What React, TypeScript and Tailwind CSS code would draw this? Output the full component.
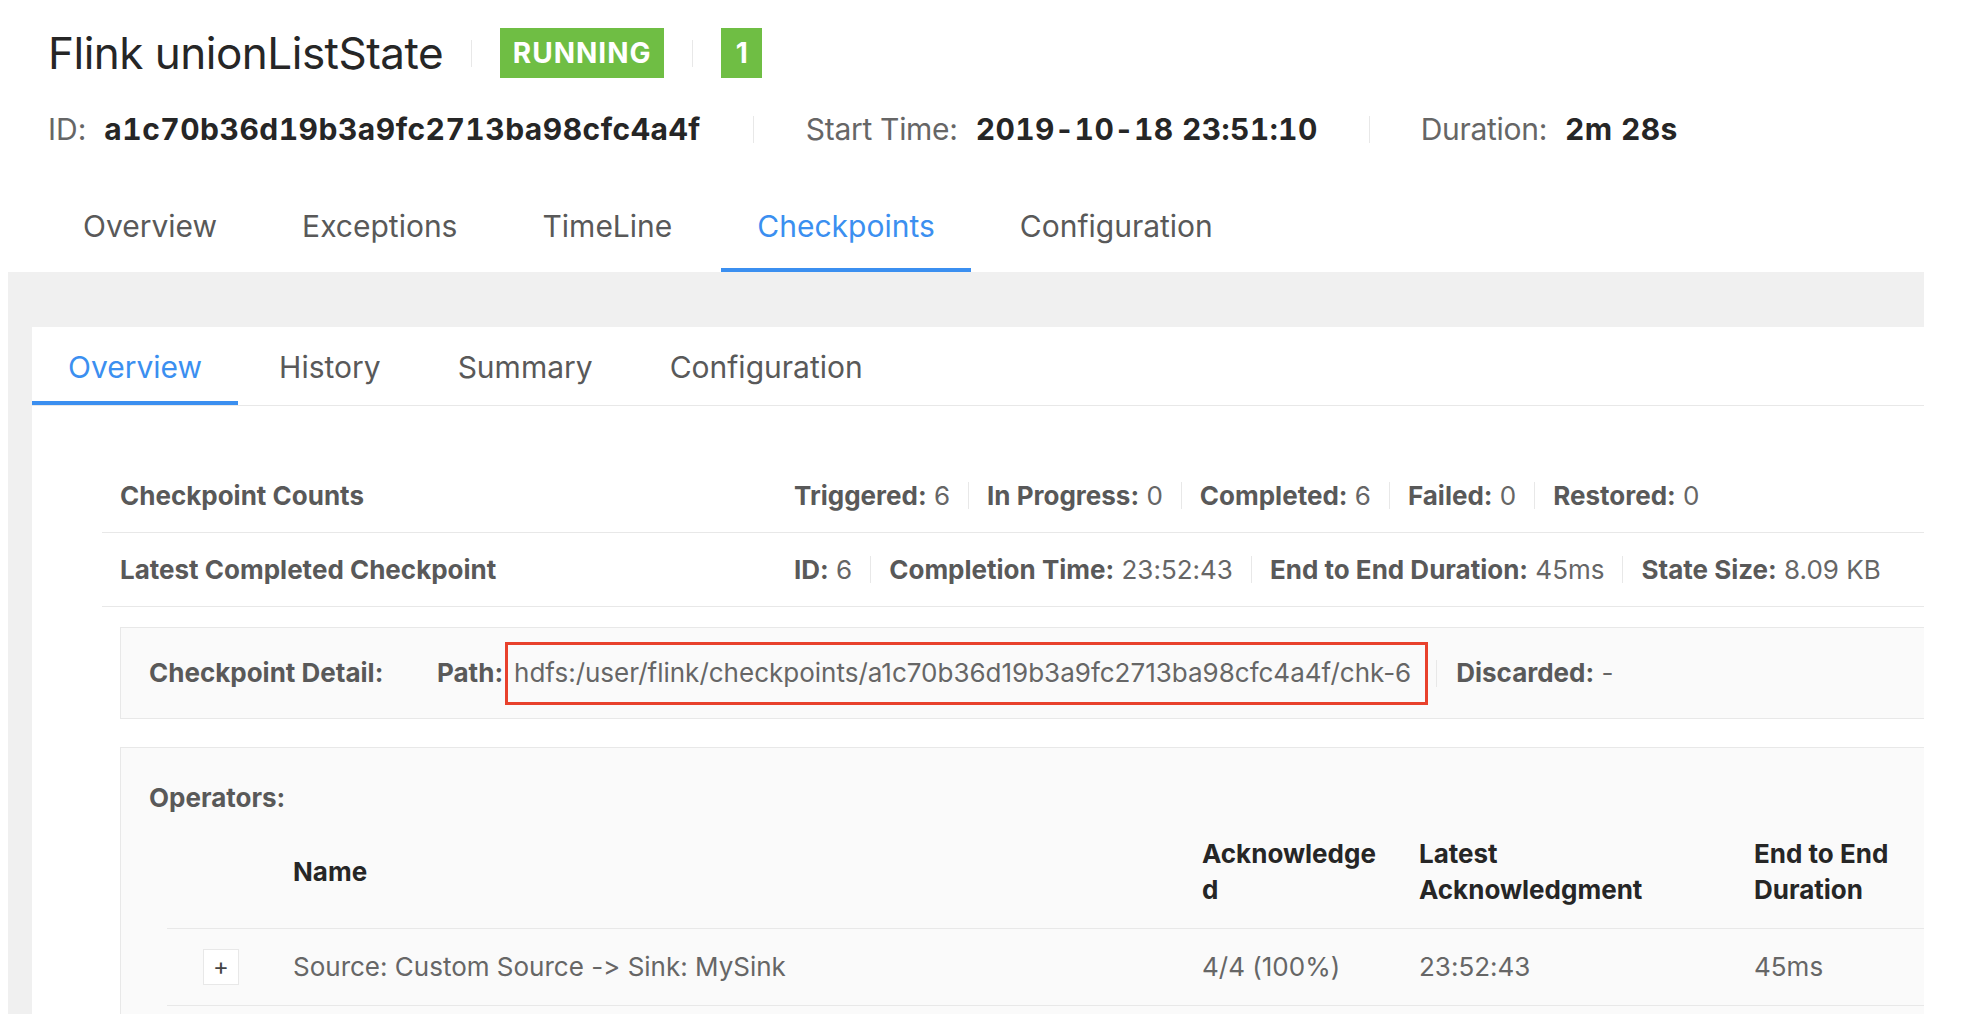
import React from "react";

const font = { fontFamily: "Inter, 'Noto Sans', sans-serif" };

const Sep = ({ className = "" }: { className?: string }) => (
  <span className={`inline-block w-px bg-[#e8e8e8] ${className}`} />
);

const mainTabs = ["Overview", "Exceptions", "TimeLine", "Checkpoints", "Configuration"];
const subTabs = ["Overview", "History", "Summary", "Configuration"];

const Stat = ({ label, value }: { label: string; value: string }) => (
  <span className="whitespace-nowrap">
    <span className="font-bold text-[#595959]">{label}:</span>{" "}
    <span className="text-[#666]">{value}</span>
  </span>
);

const StatRow = ({ title, items }: { title: string; items: [string, string][] }) => (
  <div className="flex items-center h-[74px] border-b border-[#e8e8e8]">
    <div className="w-[692px] pl-[18px] font-bold text-[#595959]">{title}</div>
    <div className="flex items-center">
      {items.map(([l, v], i) => (
        <React.Fragment key={l}>
          {i > 0 && <Sep className="h-[27px] mx-[18px]" />}
          <Stat label={l} value={v} />
        </React.Fragment>
      ))}
    </div>
  </div>
);

export default function App() {
  return (
    <div className="w-[1988px] h-[1032px] bg-white overflow-hidden [font-variant-ligatures:none]" style={font}>
      <div className="pl-[48px] pt-[28px]">
        <div className="flex items-center h-[50px]">
          <h1 className="text-[44px] leading-none text-[#262626] tracking-[-0.5px]">Flink unionListState</h1>
          <Sep className="h-[27px] mx-[28px]" />
          <span className="flex items-center justify-center w-[164px] h-[50px] bg-[#6fbe44] text-white font-bold text-[28px] tracking-[1px]">
            RUNNING
          </span>
          <Sep className="h-[27px] mx-[28px]" />
          <span className="flex items-center justify-center w-[41px] h-[50px] bg-[#6fbe44] text-white font-bold text-[28px]">
            1
          </span>
        </div>
        <div className="flex items-center h-[40px] mt-[31px] text-[30px] leading-[40px]">
          <span className="text-[#666]">ID:</span>
          <span className="ml-[18px] font-bold text-[#262626] tabular-nums tracking-[0.5px]">
            a1c70b36d19b3a9fc2713ba98cfc4a4f
          </span>
          <Sep className="h-[27px] mx-[52px]" />
          <span className="text-[#666] tracking-[-0.3px]">Start Time:</span>
          <span className="ml-[18px] font-bold text-[#262626] tabular-nums tracking-[0.4px]">2019-10-18 23:51:10</span>
          <Sep className="h-[27px] mx-[51px]" />
          <span className="text-[#666] tracking-[-0.3px]">Duration:</span>
          <span className="ml-[18px] font-bold text-[#262626] tabular-nums tracking-[0.4px]">2m 28s</span>
        </div>
      </div>

      <div className="flex gap-[13px] pl-[47px] mt-[31px] text-[30px] leading-[36px]">
        {mainTabs.map((t) => (
          <div
            key={t}
            className={`px-[36px] pt-[28px] pb-[24px] border-b-4 ${
              t === "Checkpoints" ? "border-[#3b8ff0] text-[#3b8ff0]" : "border-transparent text-[#595959]"
            }`}
          >
            {t}
          </div>
        ))}
      </div>

      <div className="ml-[8px] w-[1916px] h-[742px] bg-[#f0f0f0] pl-[24px] pt-[55px] overflow-hidden">
        <div className="bg-white h-full">
          <div className="flex gap-[5px] border-b border-[#e8e8e8] text-[30px] leading-[36px]">
            {subTabs.map((t) => (
              <div
                key={t}
                className={`px-[36px] pt-[22px] pb-[16px] border-b-4 ${
                  t === "Overview" ? "border-[#3b8ff0] text-[#3b8ff0]" : "border-transparent text-[#595959]"
                }`}
              >
                {t}
              </div>
            ))}
          </div>

          <div className="pl-[70px] pt-[53px] text-[26px] leading-[36px]">
            <StatRow
              title="Checkpoint Counts"
              items={[
                ["Triggered", "6"],
                ["In Progress", "0"],
                ["Completed", "6"],
                ["Failed", "0"],
                ["Restored", "0"],
              ]}
            />
            <StatRow
              title="Latest Completed Checkpoint"
              items={[
                ["ID", "6"],
                ["Completion Time", "23:52:43"],
                ["End to End Duration", "45ms"],
                ["State Size", "8.09 KB"],
              ]}
            />

            <div className="ml-[18px] mt-[20px] h-[92px] flex items-center pl-[28px] bg-[#fafafa] border border-r-0 border-[#e8e8e8]">
              <span className="w-[288px] font-bold text-[#595959]">Checkpoint Detail:</span>
              <span className="font-bold text-[#595959]">Path:</span>
              <span className="ml-[2px] h-[63px] flex items-center pl-[6px] pr-[14px] border-[3px] border-[#e8412c] text-[#666] whitespace-nowrap">
                hdfs:/user/flink/checkpoints/a1c70b36d19b3a9fc2713ba98cfc4a4f/chk-6
              </span>
              <Sep className="h-[27px] ml-[8px] mr-[19px]" />
              <Stat label="Discarded" value="-" />
            </div>

            <div className="ml-[18px] mt-[28px] pt-[32px] h-[400px] bg-[#fafafa] border border-r-0 border-[#e8e8e8]">
              <div className="pl-[28px] font-bold text-[#595959]">Operators:</div>
              <div className="ml-[46px]">
                <div className="flex items-center py-[20px] border-b border-[#e8e8e8] font-bold text-[#262626]">
                  <div className="w-[126px]" />
                  <div className="w-[909px]">Name</div>
                  <div className="w-[217px]">
                    Acknowledge
                    <br />d
                  </div>
                  <div className="w-[335px]">
                    Latest
                    <br />
                    Acknowledgment
                  </div>
                  <div>
                    End to End
                    <br />
                    Duration
                  </div>
                </div>
                <div className="flex items-center py-[20px] border-b border-[#e8e8e8] text-[#666]">
                  <div className="w-[126px] pl-[36px]">
                    <span className="flex items-center justify-center w-[36px] h-[36px] bg-white border border-[#e8e8e8] text-[#444] text-[24px]">
                      +
                    </span>
                  </div>
                  <div className="w-[909px]">Source: Custom Source -&gt; Sink: MySink</div>
                  <div className="w-[217px]">4/4 (100%)</div>
                  <div className="w-[335px]">23:52:43</div>
                  <div>45ms</div>
                </div>
              </div>
            </div>
          </div>
        </div>
      </div>
    </div>
  );
}
